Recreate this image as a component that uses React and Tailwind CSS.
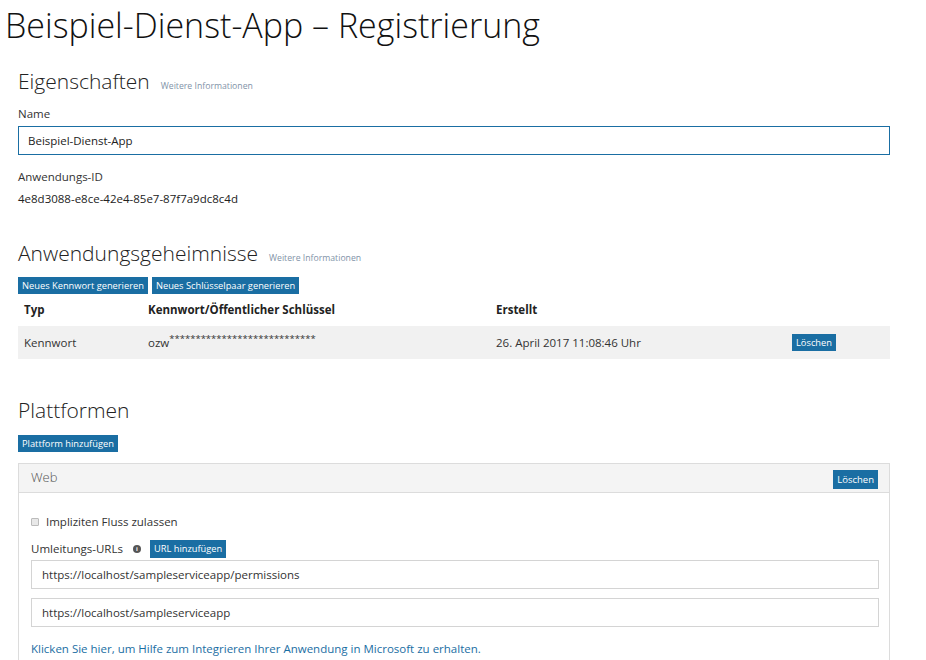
import { useState } from "react";

const font = { fontFamily: '"Open Sans", "Noto Sans", sans-serif' };

function SmallButton({ children, className = "" }) {
    return (
        <button className={"h-[17px] px-[4px] bg-[#1a6ea3] text-white text-[9.3px] leading-[17px] whitespace-nowrap " + className}>
            {children}
        </button>
    );
}

function SectionTitle({ title, more }) {
    return (
        <div className="flex items-end gap-[11px]">
            <h2 className="text-[21px] leading-[26px] font-light text-[#222]">{title}</h2>
            {more && <a className="text-[8.7px] leading-[14px] mb-[1px] text-[#7f93a8]">Weitere Informationen</a>}
        </div>
    );
}

export default function App() {
    const [name, setName] = useState("Beispiel-Dienst-App");
    const [implicit, setImplicit] = useState(false);

    const urls = [
        "https://localhost/sampleserviceapp/permissions",
        "https://localhost/sampleserviceapp",
    ];

    return (
        <div className="w-[926px] h-[660px] overflow-hidden bg-white text-[11.5px] text-[#333]" style={font}>
            <h1 className="pl-[5px] pt-[3px] text-[34px] leading-[44px] font-light text-[#111]">Beispiel-Dienst-App – Registrierung</h1>

            <div className="pl-[18px] w-[890px]">
                {/* Eigenschaften */}
                <div className="mt-[21px]">
                    <SectionTitle title="Eigenschaften" more />
                </div>
                <div className="mt-[12px] leading-[16px]">Name</div>
                <input
                    value={name}
                    onChange={(e) => setName(e.target.value)}
                    className="mt-[4px] w-[872px] h-[29px] border border-[#1a6ea3] px-[9px] text-[11.5px] text-[#222] outline-none"
                />
                <div className="mt-[14px] leading-[16px]">Anwendungs-ID</div>
                <div className="mt-[6px] leading-[16px] text-[#222]">4e8d3088-e8ce-42e4-85e7-87f7a9dc8c4d</div>

                {/* Anwendungsgeheimnisse */}
                <div className="mt-[33px]">
                    <SectionTitle title="Anwendungsgeheimnisse" more />
                </div>
                <div className="mt-[11px] flex gap-[4px]">
                    <SmallButton>Neues Kennwort generieren</SmallButton>
                    <SmallButton>Neues Schlüsselpaar generieren</SmallButton>
                </div>
                <table className="w-[872px] table-fixed">
                    <colgroup>
                        <col className="w-[130px]" />
                        <col className="w-[348px]" />
                        <col className="w-[296px]" />
                        <col />
                    </colgroup>
                    <thead>
                        <tr className="h-[32px] text-left">
                            <th className="pl-[6px] font-bold text-[#222]">Typ</th>
                            <th className="font-bold text-[#222]">Kennwort/Öffentlicher Schlüssel</th>
                            <th className="font-bold text-[#222]">Erstellt</th>
                            <th></th>
                        </tr>
                    </thead>
                    <tbody>
                        <tr className="h-[33px] bg-[#f1f1f1]">
                            <td className="pl-[6px]">Kennwort</td>
                            <td>ozw<span className="text-[9.5px] align-top relative top-[-2px]">****************************</span></td>
                            <td>26. April 2017 11:08:46 Uhr</td>
                            <td><SmallButton className="block">Löschen</SmallButton></td>
                        </tr>
                    </tbody>
                </table>

                {/* Plattformen */}
                <div className="mt-[38px]">
                    <SectionTitle title="Plattformen" />
                </div>
                <SmallButton className="mt-[12px] block">Plattform hinzufügen</SmallButton>

                <div className="mt-[11px] w-[872px] border border-[#dcdcdc]">
                    <div className="h-[29px] bg-[#f4f4f4] border-b border-[#dcdcdc] flex items-center justify-between pl-[12px] pr-[11px]">
                        <span className="text-[13px] font-light text-[#555]">Web</span>
                        <SmallButton className="h-[19px] leading-[19px] mt-[3px] text-[9.5px]">Löschen</SmallButton>
                    </div>
                    <div className="px-[12px] pt-[21px] pb-[10px]">
                        <label className="flex items-center gap-[7px] leading-[16px]">
                            <input
                                type="checkbox"
                                checked={implicit}
                                onChange={(e) => setImplicit(e.target.checked)}
                                className="w-[8px] h-[8px] appearance-none border border-[#bbb] bg-[#e8e8e8] rounded-[1px]"
                            />
                            <span>Impliziten Fluss zulassen</span>
                        </label>
                        <div className="mt-[10px] flex items-center">
                            <span className="leading-[16px]">Umleitungs-URLs</span>
                            <span className="ml-[10px] w-[8px] h-[8px] rounded-full bg-[#555] text-white text-[6px] leading-[8px] text-center font-bold">i</span>
                            <SmallButton className="ml-[9px] h-[18px] leading-[18px]">URL hinzufügen</SmallButton>
                        </div>
                        <div className="mt-[2px] flex flex-col gap-[9px]">
                            {urls.map((u) => (
                                <input
                                    key={u}
                                    defaultValue={u}
                                    className="w-[848px] h-[29px] border border-[#d4d4d4] px-[10px] text-[11.5px] text-[#333] outline-none"
                                />
                            ))}
                        </div>
                        <a className="block mt-[14px] text-[#1a6ea3] leading-[16px]">Klicken Sie hier, um Hilfe zum Integrieren Ihrer Anwendung in Microsoft zu erhalten.</a>
                    </div>
                </div>
            </div>
        </div>
    );
}
